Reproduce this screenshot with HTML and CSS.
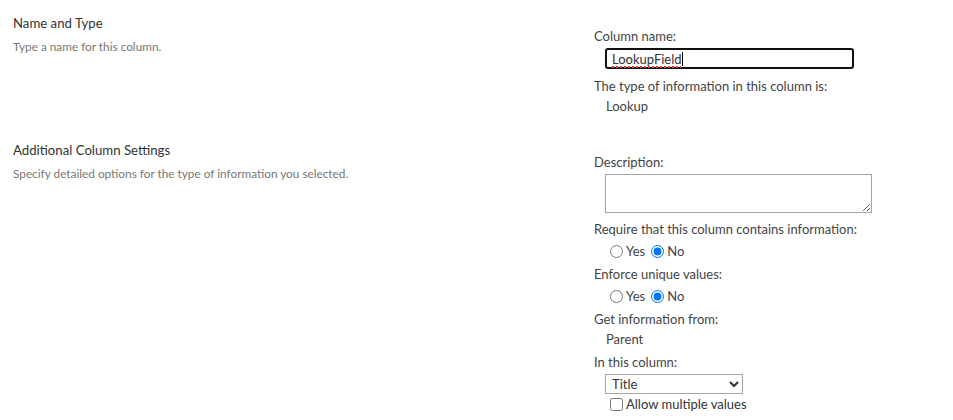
FILE: index.html
```html
<!DOCTYPE html>
<html lang="en">
<head>
<meta charset="utf-8">
<title>Create Column</title>
<link rel="stylesheet" href="styles.css">
</head>
<body>
<div class="form">
  <section class="section first">
    <div class="info">
      <h3 class="title">Name and Type</h3>
      <p class="desc">Type a name for this column.</p>
    </div>
    <div class="fields">
      <div class="label">Column name:</div>
      <div class="textbox"><span class="typed">LookupField</span><span class="caret"></span></div>
      <div class="label gap7">The type of information in this column is:</div>
      <div class="value">Lookup</div>
    </div>
  </section>
  <section class="section second">
    <div class="info">
      <h3 class="title">Additional Column Settings</h3>
      <p class="desc">Specify detailed options for the type of information you selected.</p>
    </div>
    <div class="fields">
      <div class="label">Description:</div>
      <textarea class="area"></textarea>
      <div class="label gap4">Require that this column contains information:</div>
      <div class="choices">
        <label class="choice"><input type="radio" name="req">Yes</label>
        <label class="choice"><input type="radio" name="req" checked>No</label>
      </div>
      <div class="label gap3">Enforce unique values:</div>
      <div class="choices">
        <label class="choice"><input type="radio" name="uniq">Yes</label>
        <label class="choice"><input type="radio" name="uniq" checked>No</label>
      </div>
      <div class="label gap3">Get information from:</div>
      <div class="value">Parent</div>
      <div class="label gap3">In this column:</div>
      <select class="dropdown"><option>Title</option></select>
      <label class="check"><input type="checkbox">Allow multiple values</label>
    </div>
  </section>
</div>
</body>
</html>
```
FILE: styles.css
```css
html, body {
  margin: 0;
  padding: 0;
  background: #ffffff;
}
body {
  font-family: Lato, "Open Sans", "Liberation Sans", sans-serif;
  font-size: 13px;
  color: #444444;
}
.form {
  display: flex;
  flex-direction: column;
  padding-top: 13px;
}
.section {
  display: grid;
  grid-template-columns: 581px 1fr;
  padding-left: 13px;
}
.second {
  margin-top: 24px;
}
.info {
  display: flex;
  flex-direction: column;
}
.title {
  margin: 0;
  font-size: 13.2px;
  font-weight: normal;
  line-height: 20px;
  color: #333333;
}
.desc {
  margin: 4px 0 0;
  font-size: 11.8px;
  line-height: 20px;
  color: #777777;
}
.fields {
  display: flex;
  flex-direction: column;
  align-items: flex-start;
  padding-top: 13px;
}
.second .fields {
  padding-top: 12px;
}
.label {
  line-height: 20px;
}
.gap7 { margin-top: 7px; }
.gap4 { margin-top: 6px; }
.gap3 { margin-top: 3px; }
.value {
  line-height: 20px;
  padding-left: 12px;
}
.textbox {
  margin: 2px 0 0 11px;
  width: 240px;
  height: 17px;
  border: 2px solid #111111;
  border-radius: 3px;
  display: flex;
  align-items: center;
  padding-left: 5px;
  color: #333333;
}
.typed {
  text-decoration: underline dotted #e0413a;
  text-decoration-thickness: 2px;
  text-underline-offset: 3px;
}
.caret {
  width: 1px;
  height: 14px;
  background: #000000;
}
.area {
  margin: 2px 0 0 11px;
  width: 267px;
  height: 39px;
  box-sizing: border-box;
  border: 1px solid #a6a6a6;
  resize: both;
  font: inherit;
}
.choices {
  display: flex;
  margin-top: 2px;
  padding-left: 11px;
  line-height: 20px;
}
.choice {
  display: flex;
  align-items: center;
  margin-right: 1px;
}
.choice input {
  margin: 0 3px 0 5px;
  width: 13px;
  height: 13px;
}
.dropdown {
  margin: 2px 0 0 11px;
  width: 138px;
  height: 20px;
  border: 1px solid #a6a6a6;
  border-radius: 0;
  background: #ffffff;
  font: inherit;
  color: #333333;
  padding: 0 2px;
}
.check {
  display: flex;
  align-items: center;
  margin-left: 11px;
  line-height: 20px;
  color: #333333;
}
.check input {
  margin: 0 3px 0 5px;
  width: 13px;
  height: 13px;
}
```
